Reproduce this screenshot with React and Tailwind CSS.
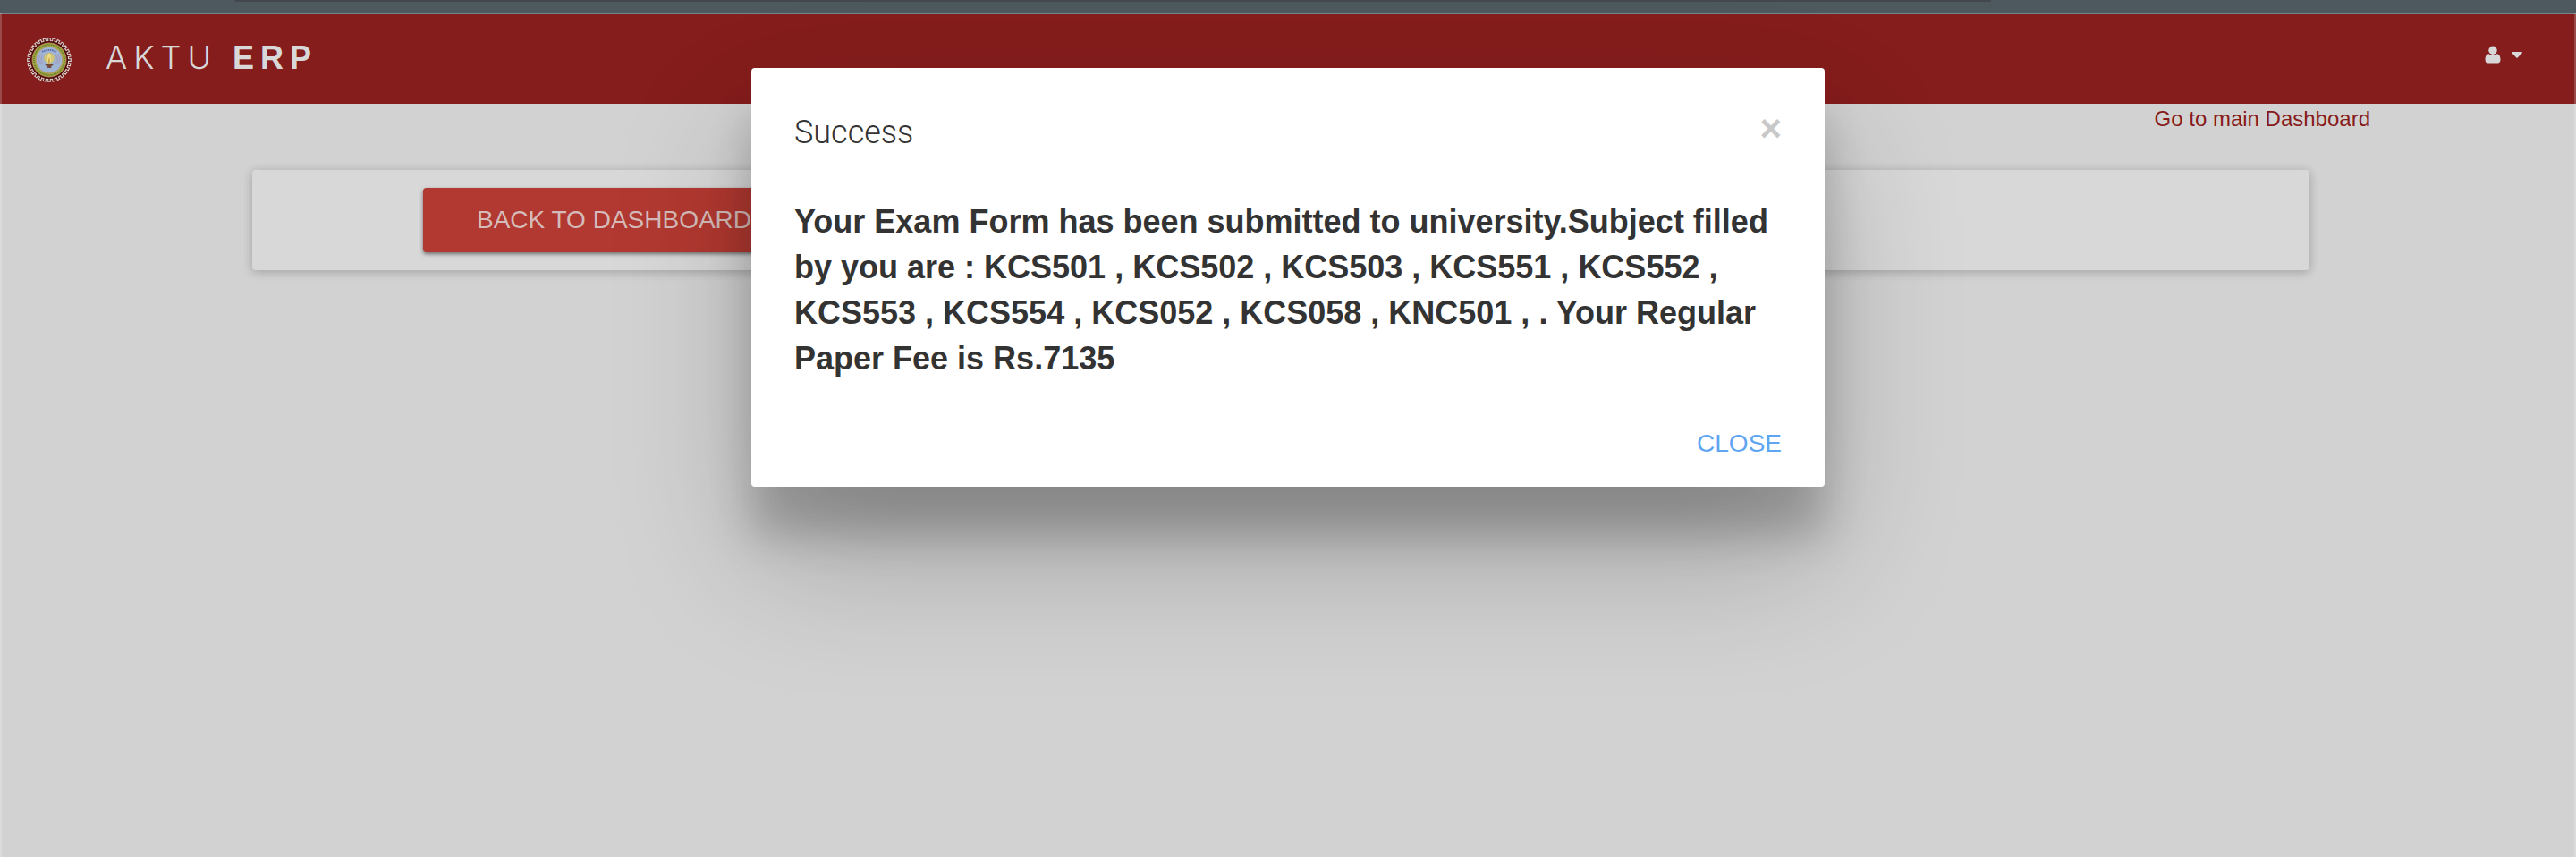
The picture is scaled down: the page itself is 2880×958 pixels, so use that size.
const TEETH = 28;

// Square-toothed gear outline, four points for each tooth.
const gearPoints = Array.from({ length: TEETH * 4 }, (_, i) => {
  const step = (Math.PI * 2) / TEETH;
  const corner = [0, 0, 0.5, 0.5][i % 4];
  const radius = i % 4 === 1 || i % 4 === 2 ? 24.3 : 21.6;
  const angle = (Math.floor(i / 4) + corner - 0.25) * step - Math.PI / 2;
  return `${(25 + radius * Math.cos(angle)).toFixed(2)},${(25 + radius * Math.sin(angle)).toFixed(2)}`;
}).join(" ");

function Emblem() {
  return (
    <svg viewBox="0 0 50 50" className="size-[50px] shrink-0" aria-hidden="true">
      <polygon points={gearPoints} fill="#4f0a08" stroke="#d9cfcc" strokeWidth="1.1" />
      <circle cx="25" cy="25" r="19" fill="#a3ab3c" stroke="#b98a62" strokeWidth="0.9" />
      <circle cx="25" cy="25" r="17" fill="none" stroke="#5f7434" strokeWidth="1.7" strokeDasharray="1.1 0.9" />
      <circle cx="25" cy="25" r="14.8" fill="#9fb5d6" stroke="#b58f6e" strokeWidth="0.8" />
      <path d="M17 16 Q25 11.8 33 16" fill="none" stroke="#5c68a8" strokeWidth="1.8" strokeDasharray="1.6 0.7" />
      <path d="M15.5 18.5 L13 24 L16 30 M17.5 20 L15.5 25 L18 29 M34.5 18.5 L37 24 L34 30 M32.5 20 L34.5 25 L32 29" fill="none" stroke="#a995b4" strokeWidth="1" />
      <circle cx="25" cy="22.8" r="5.8" fill="#d2c878" stroke="#b9a970" strokeWidth="0.5" />
      <path d="M25 17 Q28 22.5 26.3 28.5 H23.7 Q22 22.5 25 17Z" fill="#efe08a" />
      <path d="M25 21.5 Q26 25 25.6 28.5 H24.4 Q24 25 25 21.5Z" fill="#b8832c" />
      <path d="M20 29 Q25 30.5 30 29 Q29.5 32 26.5 32.4 L28 34 H22 L23.5 32.4 Q20.5 32 20 29Z" fill="#744a3a" />
    </svg>
  );
}

function UserIcon() {
  return (
    <svg viewBox="0 0 18 20" className="h-5 w-[18px]" fill="currentColor" aria-hidden="true">
      <circle cx="9" cy="5.2" r="4.7" />
      <path d="M4.6 9.2 C1.6 9.4 0.5 12.2 0.5 15.8 C0.5 18.2 1.7 19.4 3.6 19.4 H14.4 C16.3 19.4 17.5 18.2 17.5 15.8 C17.5 12.2 16.4 9.4 13.4 9.2 C12.2 10.3 10.8 10.9 9 10.9 C7.2 10.9 5.8 10.3 4.6 9.2Z" />
    </svg>
  );
}

function CaretIcon() {
  return (
    <svg viewBox="0 0 12 7" className="h-[7px] w-3" fill="currentColor" aria-hidden="true">
      <path d="M0.8 0 H11.2 Q12.3 0.3 11.6 1.2 L6.7 6.4 Q6 7 5.3 6.4 L0.4 1.2 Q-0.3 0.3 0.8 0Z" />
    </svg>
  );
}

export default function App() {
  return (
    <div className="relative min-h-screen overflow-hidden bg-[#d2d2d2] font-['Liberation_Sans',Arial,sans-serif]">
      <div className="h-4 border-b-2 border-[#76858a] bg-[#4d585f] pl-[262px]">
        <div className="h-0.5 w-3/4 rounded-b bg-[#42484d]" />
      </div>

      <header className="flex h-[100px] items-start justify-between bg-[#841d1c] pr-[60px] pl-[30px] text-[#d8d8d8]">
        <a href="#home" className="flex items-start pt-[26px]">
          <Emblem />
          <span className="ml-[38px] text-[36px] leading-[44px] tracking-[7px]">
            <span className="font-['Inter'] font-light">AKTU</span> <b>ERP</b>
          </span>
        </a>
        <button type="button" aria-label="Account menu" className="mt-[35px] flex h-5 items-center gap-3">
          <UserIcon />
          <CaretIcon />
        </button>
      </header>

      <main className="pr-4">
        <div className="flex justify-end pr-[214px]">
          <a href="#dashboard" className="pt-px text-2xl text-[#871b1b]">Go to main Dashboard</a>
        </div>
        <section className="mx-auto mt-[41px] flex h-28 max-w-[2300px] items-center rounded-[4px] bg-[#d8d8d8] pl-[191px] shadow-[0_2px_12px_rgba(0,0,0,0.12),0_2px_12px_rgba(0,0,0,0.12)]">
          <button type="button" className="h-[72px] rounded-[4px] bg-[#b23931] px-[60px] text-[28px] text-[#d5bcba] shadow-[0_2px_4px_rgba(0,0,0,0.5)]">
            BACK TO DASHBOARD
          </button>
        </section>
      </main>

      <div className="pointer-events-none absolute inset-x-0 top-3.5 bottom-0 border-x-2 border-white/20" />

      <div
        role="dialog"
        aria-modal="true"
        aria-labelledby="dialog-title"
        className="absolute inset-x-0 top-[76px] mx-auto w-[1200px] max-w-full rounded-[4px] bg-white px-12 pt-12 pb-3 text-[#333] shadow-[0_54px_48px_rgba(0,0,0,0.2),0_80px_154px_rgba(0,0,0,0.22)]"
      >
        <div className="flex items-start justify-between">
          <h4 id="dialog-title" className="font-['Roboto'] text-[36px] leading-[48px] font-light">Success</h4>
          <button type="button" aria-label="Close dialog" className="text-[42px] leading-[40px] font-bold text-[#c8c8c8]">×</button>
        </div>
        <p className="mt-[50px] text-[36px] leading-[51px] font-bold">
          Your Exam Form has been submitted to university.Subject filled by you are : KCS501 , KCS502 , KCS503 , KCS551 , KCS552 , KCS553 , KCS554 , KCS052 , KCS058 , KNC501 , . Your Regular Paper Fee is Rs.7135
        </p>
        <div className="mt-[34px] flex justify-end">
          <button type="button" className="h-[72px] text-[28px] text-[#5fa6f2]">CLOSE</button>
        </div>
      </div>
    </div>
  );
}
